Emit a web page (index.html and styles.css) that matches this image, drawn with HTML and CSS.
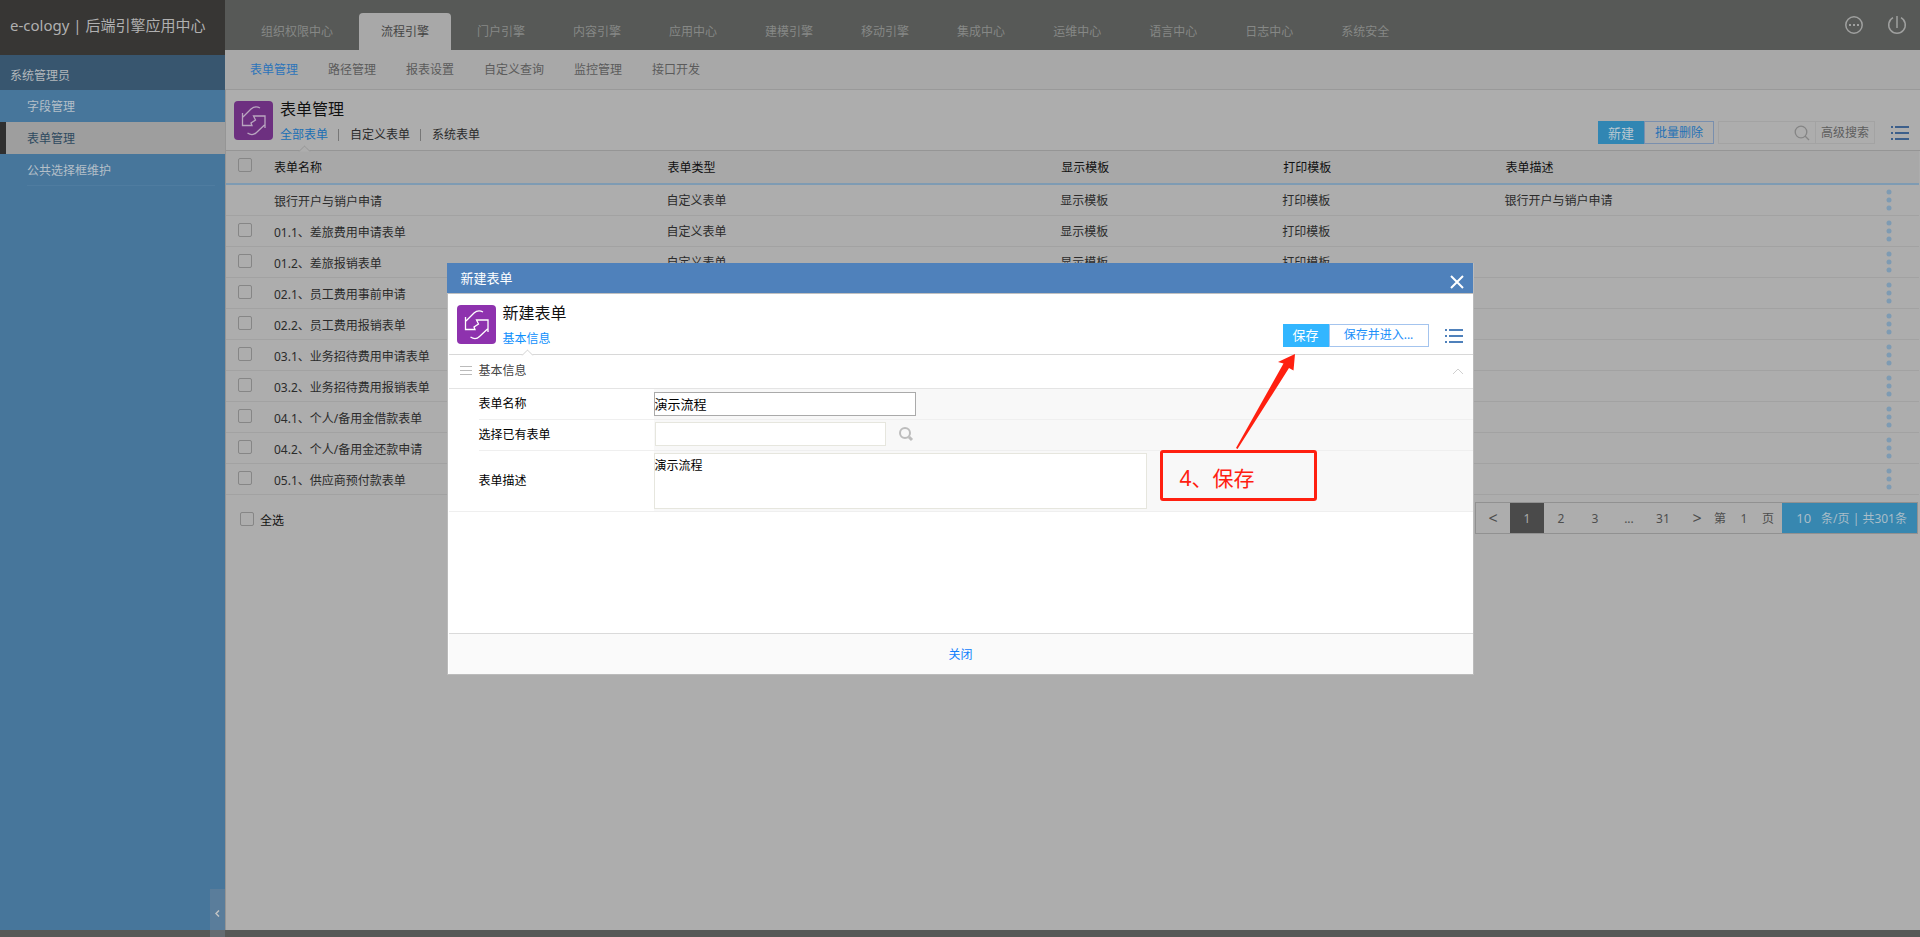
FILE: index.html
```html
<!DOCTYPE html>
<html lang="zh-CN">
<head>
<meta charset="utf-8">
<title>后端引擎应用中心</title>
<link rel="stylesheet" href="styles.css">
</head>
<body>
<svg class="defs" aria-hidden="true">
  <symbol id="i-flow" viewBox="0 0 39 39"><path d="M26 7C23 5.400 20 5.400 17 8L9 16M8.500 12V24.500H18L17 22L21.500 19L19.500 15H31V27M30.500 24L22.500 31.500C19.500 34.500 16.500 34 13.500 32"/></symbol>
  <symbol id="i-menu" viewBox="0 0 18 14"><path d="M0 1H2M4 1H18M0 7H2M4 7H18M0 13H2M4 13H18"/></symbol>
  <symbol id="i-dots" viewBox="0 0 6 22"><circle cx="3" cy="3" r="2.500"/><circle cx="3" cy="11" r="2.500"/><circle cx="3" cy="19" r="2.500"/></symbol>
</svg>
<div class="app">
  <aside class="side">
    <h1 class="brand">e-cology | 后端引擎应用中心</h1>
    <div class="user">系统管理员</div>
    <nav class="side-nav">
      <a href="#">字段管理</a>
      <a href="#" class="on">表单管理</a>
      <a href="#" class="last">公共选择框维护</a>
    </nav>
  </aside>
  <main class="main">
    <header class="top">
      <nav class="tabs">
        <a href="#">组织权限中心</a><a href="#" class="on">流程引擎</a><a href="#">门户引擎</a><a href="#">内容引擎</a><a href="#">应用中心</a><a href="#">建模引擎</a><a href="#">移动引擎</a><a href="#">集成中心</a><a href="#">运维中心</a><a href="#">语言中心</a><a href="#">日志中心</a><a href="#">系统安全</a>
      </nav>
      <div class="top-tools">
        <button type="button" aria-label="更多"><svg width="20" height="20" viewBox="0 0 20 20"><circle cx="10" cy="10" r="8.200"/><path d="M5 10H7M9 10H11M13 10H15" stroke-width="2"/></svg></button>
        <button type="button" aria-label="退出"><svg width="20" height="20" viewBox="0 0 20 20"><path d="M6 2.600A8.300 8.300 0 1 0 14 2.600M10 1V13"/></svg></button>
      </div>
    </header>
    <nav class="subnav">
      <a href="#" class="on">表单管理</a><a href="#">路径管理</a><a href="#">报表设置</a><a href="#">自定义查询</a><a href="#">监控管理</a><a href="#">接口开发</a>
    </nav>
    <section class="content">
      <div class="head">
        <svg class="badge"><use href="#i-flow"/></svg>
        <div class="head-text">
          <h2>表单管理</h2>
          <div class="filters"><a href="#" class="on">全部表单</a><i></i><a href="#">自定义表单</a><i></i><a href="#">系统表单</a></div>
        </div>
        <div class="actions">
          <button type="button" class="primary">新建</button><button type="button" class="plain">批量删除</button>
          <div class="search">
            <input type="text" aria-label="搜索">
            <svg width="16" height="16" viewBox="0 0 16 16"><circle cx="7" cy="7" r="5.800"/><path d="M11 11L15 15"/></svg>
            <button type="button">高级搜索</button>
          </div>
          <svg class="menu"><use href="#i-menu"/></svg>
        </div>
      </div>
      <table class="grid">
        <colgroup><col class="c-check"><col class="c-wide"><col class="c-wide"><col class="c-mid"><col class="c-mid"><col><col class="c-ops"></colgroup>
        <thead><tr><th><input type="checkbox" aria-label="全选表单"></th><th>表单名称</th><th>表单类型</th><th>显示模板</th><th>打印模板</th><th>表单描述</th><th></th></tr></thead>
        <tbody>
          <tr><td></td><td>银行开户与销户申请</td><td>自定义表单</td><td>显示模板</td><td>打印模板</td><td>银行开户与销户申请</td><td><svg class="dots"><use href="#i-dots"/></svg></td></tr>
          <tr><td><input type="checkbox" aria-label="选择"></td><td>01.1、差旅费用申请表单</td><td>自定义表单</td><td>显示模板</td><td>打印模板</td><td></td><td><svg class="dots"><use href="#i-dots"/></svg></td></tr>
          <tr><td><input type="checkbox" aria-label="选择"></td><td>01.2、差旅报销表单</td><td>自定义表单</td><td>显示模板</td><td>打印模板</td><td></td><td><svg class="dots"><use href="#i-dots"/></svg></td></tr>
          <tr><td><input type="checkbox" aria-label="选择"></td><td>02.1、员工费用事前申请</td><td></td><td></td><td></td><td></td><td><svg class="dots"><use href="#i-dots"/></svg></td></tr>
          <tr><td><input type="checkbox" aria-label="选择"></td><td>02.2、员工费用报销表单</td><td></td><td></td><td></td><td></td><td><svg class="dots"><use href="#i-dots"/></svg></td></tr>
          <tr><td><input type="checkbox" aria-label="选择"></td><td>03.1、业务招待费用申请表单</td><td></td><td></td><td></td><td></td><td><svg class="dots"><use href="#i-dots"/></svg></td></tr>
          <tr><td><input type="checkbox" aria-label="选择"></td><td>03.2、业务招待费用报销表单</td><td></td><td></td><td></td><td></td><td><svg class="dots"><use href="#i-dots"/></svg></td></tr>
          <tr><td><input type="checkbox" aria-label="选择"></td><td>04.1、个人/备用金借款表单</td><td></td><td></td><td></td><td></td><td><svg class="dots"><use href="#i-dots"/></svg></td></tr>
          <tr><td><input type="checkbox" aria-label="选择"></td><td>04.2、个人/备用金还款申请</td><td></td><td></td><td></td><td></td><td><svg class="dots"><use href="#i-dots"/></svg></td></tr>
          <tr><td><input type="checkbox" aria-label="选择"></td><td>05.1、供应商预付款表单</td><td></td><td></td><td></td><td></td><td><svg class="dots"><use href="#i-dots"/></svg></td></tr>
        </tbody>
      </table>
      <div class="foot">
        <label class="all"><input type="checkbox"><span>全选</span></label>
        <div class="pager">
          <button type="button" class="arrow">&lt;</button><button type="button" class="on">1</button><button type="button">2</button><button type="button">3</button><span class="gap">...</span><button type="button">31</button><button type="button" class="arrow next">&gt;</button>
          <label class="jump">第<input type="text" value="1">页</label>
          <span class="size"><b>10</b>条/页 | 共301条</span>
        </div>
      </div>
    </section>
  </main>
</div>
<div class="bottom"></div>
<button type="button" class="collapse" aria-label="收起"><svg width="5" height="7" viewBox="0 0 5 7"><path d="M4 0.500L1 3.500L4 6.500"/></svg></button>

<div class="layer">
  <form class="modal" role="dialog" aria-label="新建表单">
    <div class="modal-title"><span>新建表单</span><button type="button" aria-label="关闭窗口"><svg width="14" height="14" viewBox="0 0 14 14"><path d="M1 1L13 13M13 1L1 13"/></svg></button></div>
    <div class="modal-head">
      <svg class="badge"><use href="#i-flow"/></svg>
      <div class="head-text">
        <h2>新建表单</h2>
        <div class="filters"><a href="#" class="on">基本信息</a></div>
      </div>
      <div class="actions">
        <button type="button" class="primary">保存</button><button type="button" class="plain enter">保存并进入...</button>
        <svg class="menu"><use href="#i-menu"/></svg>
      </div>
    </div>
    <div class="group">
      <svg width="12" height="10" viewBox="0 0 12 10"><path d="M0 0.500H12M0 4.500H12M0 8.500H12"/></svg>
      <h3>基本信息</h3>
      <svg width="14" height="8" viewBox="0 0 14 8"><path d="M2 7L7 2L12 7"/></svg>
    </div>
    <div class="fields">
      <div class="field"><label for="f-name">表单名称</label><div class="value"><input id="f-name" class="name" type="text" value="演示流程"></div></div>
      <div class="field"><label for="f-pick">选择已有表单</label><div class="value"><input id="f-pick" class="pick" type="text"><button type="button" class="find" aria-label="查找"><svg width="16" height="16" viewBox="0 0 16 16"><circle cx="7" cy="7" r="5"/><path d="M11 11L14 14" stroke-width="3"/></svg></button></div></div>
      <div class="field tall"><label for="f-desc">表单描述</label><div class="value"><textarea id="f-desc">演示流程</textarea></div></div>
    </div>
    <div class="modal-foot"><button type="button">关闭</button></div>
    <svg class="pointer" width="64" height="100" viewBox="0 0 64 100"><path d="M60 1L43 9L48.500 10.500L1 95L2.500 96L54 15L58.500 17.500Z"/></svg>
    <div class="note">4、保存</div>
  </form>
</div>
</body>
</html>
```
FILE: styles.css
```css
* { box-sizing: border-box; }
html, body { height: 100%; margin: 0; }
body {
  display: flex;
  flex-direction: column;
  background: #adadad;
  color: #2b2b2b;
  font: 12px/16px "Noto Sans", "Noto Sans CJK SC", sans-serif;
}
a { color: inherit; text-decoration: none; }
h1, h2, h3 { margin: 0; font-weight: 400; }
button, input, textarea { font: inherit; color: inherit; border: 0; border-radius: 0; background: none; padding: 0; margin: 0; }
svg { display: block; fill: none; flex: none; }
.defs { position: absolute; width: 0; height: 0; }

.app { flex: 1; display: flex; min-height: 0; }
.side { width: 225px; background: #47769b; color: #b4bfc8; }
.brand { height: 55px; padding: 13px 10px; background: #373634; color: #b0b0b0; font-size: 15px; line-height: 24px; white-space: nowrap; }
.user { height: 35px; padding: 12px 10px 5px; background: #38566f; color: #b3b8bc; line-height: 18px; }
.side-nav a { display: block; height: 32px; padding-left: 27px; line-height: 34px; }
.side-nav .on { background: #9e9e9e; color: #2f4a60; border-left: 6px solid #2f2f2f; padding-left: 21px; }
.side-nav .last { margin: 0 10px 0 27px; padding: 0; border-bottom: 1px solid #4f7ca0; }

.main { flex: 1; min-width: 0; display: flex; flex-direction: column; }
.top { height: 50px; display: flex; justify-content: space-between; background: #575957; padding-left: 14px; }
.tabs { display: flex; align-items: flex-end; gap: 4px; color: #868886; }
.tabs a { padding: 0 22px; height: 37px; line-height: 38px; border-radius: 4px 4px 0 0; }
.tabs .on { background: #a8a8a8; color: #454545; }
.top-tools { display: flex; gap: 23px; padding: 15px 13px 0 0; align-items: flex-start; }
.top-tools svg { stroke: #9fa09f; stroke-width: 1.500; }
.subnav { height: 40px; display: flex; gap: 30px; padding: 0 25px; line-height: 39px; background: #a8a8a8; color: #5b5b5b; border-bottom: 1px solid #999; }
.subnav .on { color: #2c74ba; }

.content { flex: 1; border-left: 1px solid #959595; }
.head { height: 61px; display: flex; padding: 11px 11px 0 8px; border-bottom: 1px solid #959595; }
.badge { width: 39px; height: 39px; border-radius: 4px; background: #6d3080; stroke: #b9a5bf; stroke-width: 1.300; }
.head-text { flex: 1; padding-left: 7px; }
.head-text h2 { font-size: 16px; line-height: 17px; color: #111; }
.filters { display: flex; align-items: center; height: 16px; margin-top: 9px; line-height: 16px; }
.filters i { width: 1px; height: 12px; margin: 0 11px 0 10px; background: #777; }
.filters .on { color: #1a6fb4; position: relative; }
.filters .on::after {
  content: ""; position: absolute; left: 20px; top: 20px; width: 8px; height: 8px;
  background: #adadad; border: solid #959595; border-width: 1px 0 0 1px; transform: rotate(45deg);
  clip-path: polygon(0 0, 100% 0, 0 100%);
}
.actions { display: flex; align-items: flex-start; padding-top: 20px; }
.primary { width: 46px; height: 23px; background: #3186b3; color: #b9c8d0; font-size: 13px; }
.plain { width: 70px; height: 23px; border: 1px solid #798fae; color: #2471b5; }
.search { display: flex; align-items: center; height: 23px; width: 157px; margin-left: 4px; border: 1px solid #a3a3a3; }
.search input { flex: 1; min-width: 0; height: 21px; }
.search svg { stroke: #858585; stroke-width: 1.300; margin-right: 5px; }
.search button { width: 59px; height: 21px; border-left: 1px solid #a3a3a3; color: #5e5e5e; }
.menu { width: 18px; height: 14px; margin: 5px 7px 0 16px; stroke: #3c5f8b; stroke-width: 2; }
.head .actions .menu { margin-right: 0; }

input[type="checkbox"] { appearance: none; display: block; width: 14px; height: 14px; border: 1px solid #868686; border-radius: 2px; }
.grid { width: calc(100% - 1px); border-collapse: separate; border-spacing: 0; table-layout: fixed; }
.c-check { width: 47px; }
.c-wide { width: 23.250%; }
.c-mid { width: 13.120%; }
.c-ops { width: 38px; }
.grid th, .grid td { padding: 2px 0 0; text-align: left; vertical-align: middle; font-weight: 400; white-space: nowrap; }
.grid th { height: 34px; padding-left: 1px; border-bottom: 2px solid #7e9bb3; background: #a8a8a8; color: #101010; }
.grid td { height: 31px; border-bottom: 1px solid #a2a2a2; }
.grid td:nth-child(2) { padding: 3px 0 0 1px; }
.grid th:first-child, .grid td:first-child { padding: 7px 0 0 12px; vertical-align: top; }
.grid td:last-child { padding: 0; }
.dots { width: 6px; height: 22px; margin-left: 5px; fill: #7e9bb3; }

.foot { display: flex; justify-content: space-between; align-items: flex-start; padding: 7px 2px 0 14px; }
.all { display: flex; gap: 6px; padding-top: 10px; color: #111; line-height: 18px; }
.pager { display: flex; height: 32px; border: 1px solid #919191; line-height: 31px; color: #4e4e4e; white-space: nowrap; }
.pager button, .gap { width: 34px; text-align: center; }
.pager .on { background: #4a4a4a; color: #aaa; }
.pager .arrow { font-size: 16px; }
.jump { display: flex; padding: 0 8px 0 0; }
.jump input { width: 36px; text-align: center; }
.size { width: 135px; background: #3787b0; color: #a9bdc8; display: flex; justify-content: flex-end; gap: 10px; padding-right: 10px; }
.size b { font-weight: 400; font-size: 13px; }

.bottom { height: 7px; background: #575957; }
.collapse { position: absolute; left: 210px; bottom: 0; width: 15px; height: 48px; display: flex; align-items: center; justify-content: center; background: rgba(120, 137, 155, .4); }
.collapse svg { stroke: #c4c4c4; stroke-width: 1.500; }

.layer { position: absolute; inset: 0; display: flex; align-items: center; justify-content: center; }
.modal { position: relative; width: 1027px; max-width: 100%; min-height: 412px; display: flex; flex-direction: column; background: #fff; border: 1px solid #bbb; border-top: 0; color: #000; }
.modal-title { display: flex; justify-content: space-between; height: 31px; margin: 0 0 0 -1px; padding: 3px 9px 0 14px; background: #4f81bb; border-bottom: 1px solid #c0c0c0; color: #fff; font-size: 13px; line-height: 24px; }
.modal-title svg { stroke: #fff; stroke-width: 2; margin-top: 8px; }
.modal-title button { height: 24px; }
.modal-head { display: flex; height: 61px; margin-left: 1px; padding: 11px 3px 0 8px; border-bottom: 1px solid #d8d8d8; }
.modal .badge { background: #8e32ae; stroke: #fff; }
.modal .filters .on { color: #0f90fc; }
.modal .filters .on::after { background: #fff; border-color: #d0d0d0; }
.modal .actions { padding-top: 19px; }
.modal .primary { background: #32b6ff; color: #fff; }
.modal .plain { border-color: #a4c4ee; color: #1b8ffa; }
.modal .enter { width: 100px; }
.modal .menu { stroke: #4f81bb; }
.group { display: flex; align-items: center; height: 34px; margin-left: 1px; padding: 0 8px 0 11px; border-bottom: 1px solid #e4e4e4; }
.group svg { stroke: #bbb; }
.group svg:last-child { stroke: #d0d0d0; }
.group h3 { flex: 1; padding-left: 7px; font-size: 12px; line-height: 16px; color: #444; }
.fields { margin-left: 1px; border-bottom: 1px solid #efefef; }
.field { display: flex; margin-left: 30px; min-height: 31px; border-bottom: 1px solid #efefef; }
.field:last-child { border-bottom: 0; }
.field label { width: 175px; display: flex; align-items: center; padding-top: 1px; }
.value { flex: 1; display: flex; align-items: center; background: #f8f8f8; }
.name { width: 262px; height: 24px; border: 1px solid #aaa; background: #fff; font-size: 13px; padding-bottom: 1px; }
.pick { width: 231px; height: 24px; margin: 0 0 2px 1px; border: 1px solid #e6e6de; background: #fff; }
.find { margin: 0 0 2px 12px; }
.find svg { stroke: #bdbdbd; stroke-width: 2; }
.field textarea { display: block; width: 493px; height: 56px; margin: 2px 0; padding: 4px 0 0; border: 1px solid #e6e6de; background: #fff; resize: none; }
.modal-foot { display: flex; align-items: center; justify-content: center; height: 41px; margin: auto 0 0 1px; padding-top: 2px; background: #fafafa; border-top: 1px solid #dadada; color: #0f80fc; }
.note { position: absolute; left: 712px; top: 187px; width: 157px; height: 51px; padding: 10px 17px 0; border: 3px solid #ff2010; border-radius: 3px; color: #ff2010; font-size: 21px; line-height: 30px; }
.pointer { position: absolute; left: 787px; top: 90px; fill: #ff2010; }
```
